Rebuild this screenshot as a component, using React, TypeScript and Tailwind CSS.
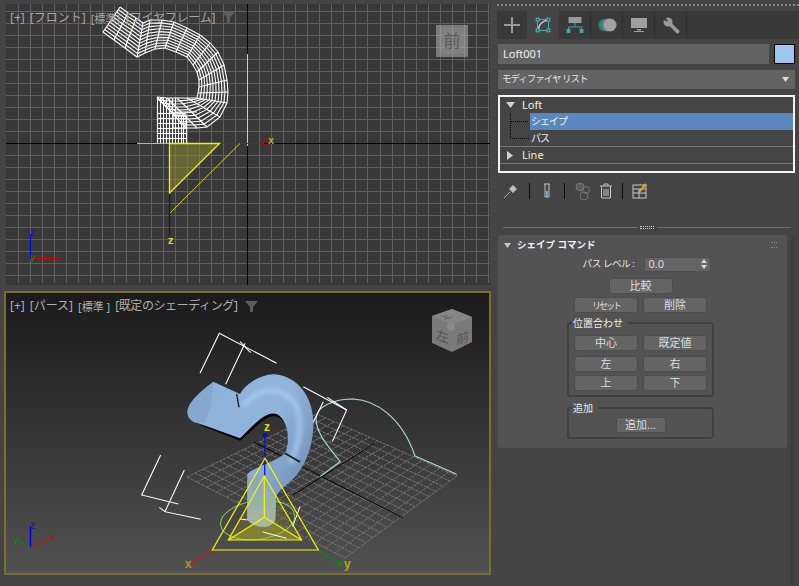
import React from "react";

const range = (n: number) => Array.from({ length: n }, (_, i) => i);
type P = [number, number];
const O0: P[] = [[120,7],[128,13],[136,18],[143,23],[150,20],[162,20],[174,22],[187,28],[200,35],[210,43],[218,52],[224,65],[227,80],[228,92],[227,103],[220,117],[207,127],[197,128],[186,128]];
const I0: P[] = [[103,32],[114,40],[125,48],[137,57],[145,53],[155,49],[165,48],[176,52],[187,57],[193,65],[197,72],[199,80],[199,87],[198,93],[197,98],[187,98],[177,98],[167,98],[157,97]];
const mix = (a: P, b: P, t: number): P => [a[0] + (b[0] - a[0]) * t, a[1] + (b[1] - a[1]) * t];
const pts = (a: P[]) => a.map((p) => p.join(",")).join(" ");

function Wire() {
  const fr = [0, 0.1, 0.2, 0.3, 0.4, 0.5, 0.6, 0.7, 0.8, 0.9, 1];
  return (
    <g stroke="#fff" strokeWidth="1.1" fill="none">
      {O0.map((o, i) => <line key={i} x1={o[0]} y1={o[1]} x2={I0[i][0]} y2={I0[i][1]} />)}
      {fr.map((f) => <polyline key={f} points={pts(O0.map((o, i) => mix(o, I0[i], f)))} />)}
      {[157,160,163,166,169,172,175,178,181,183,186].map((x) => <line key={x} x1={x+0.5} y1={x < 176 ? 98 : 116} x2={x+0.5} y2={143} />)}
      {[113,118,123,128,133,138].map((y) => <line key={y} x1={157} y1={y+0.5} x2={186} y2={y+0.5} />)}
      <polyline points="157,98 176,116 186,116" />
      <polyline points="161,98 176,112 197,112" />
      <rect x="173" y="115" width="13" height="13" />
    </g>
  );
}

function TopView() {
  return (
    <svg className="absolute inset-0 w-full h-full" viewBox="6 4 484 281">
      <g stroke="#606060" strokeWidth="1" shapeRendering="crispEdges">
        {range(40).map((k) => <line key={k} x1={18.5 + 12.05 * k} y1={4} x2={18.5 + 12.05 * k} y2={283} />)}
        {range(23).map((k) => <line key={k} x1={6} y1={11.5 + 12 * k} x2={490} y2={11.5 + 12 * k} />)}
      </g>
      <g shapeRendering="crispEdges">
        <line x1="6" y1="143.5" x2="490" y2="143.5" stroke="#000" />
        <line x1="247.5" y1="4" x2="247.5" y2="285" stroke="#000" />
        <line x1="247.5" y1="54" x2="247.5" y2="146" stroke="#a6d8dc" />
        <line x1="137" y1="143.5" x2="169" y2="143.5" stroke="#9ccc70" />
        <line x1="220" y1="143.5" x2="264" y2="143.5" stroke="#a81010" />
        <line x1="169.5" y1="193" x2="169.5" y2="235" stroke="#000c90" />
      </g>
      <Wire />
      <polygon points="169.5,143.5 219.5,143.5 169.5,193" fill="#8c8a30" fillOpacity="0.55" stroke="#f5f000" strokeWidth="1.3" />
      <line x1="240" y1="143.5" x2="170" y2="213" stroke="#e6e020" strokeWidth="0.9" />
      <rect x="263" y="141" width="4" height="4" fill="none" stroke="#c00000" strokeWidth="1.2" />
      <text x="268" y="144" fill="#b5b020" fontSize="11" fontWeight="700" fontFamily="Liberation Sans, sans-serif">x</text>
      <text x="168" y="244" fill="#e6d820" fontSize="11" fontWeight="700" fontFamily="Liberation Sans, sans-serif">z</text>
      <g shapeRendering="crispEdges">
        <line x1="30.5" y1="259" x2="30.5" y2="234" stroke="#0000e0" strokeWidth="1.5" />
        <line x1="31" y1="258.5" x2="55" y2="258.5" stroke="#e00000" strokeWidth="1.5" />
      </g>
      <text x="30" y="236" fill="#1010d0" fontSize="10" fontFamily="Liberation Sans, sans-serif">z</text>
      <text x="30" y="261" fill="#0d8a0d" fontSize="11" fontFamily="Liberation Sans, sans-serif">y</text>
      <text x="55" y="261" fill="#8c2020" fontSize="11" fontFamily="Liberation Sans, sans-serif">x</text>
      <rect x="436" y="25" width="32" height="32" fill="#b0b0b0" fillOpacity="0.55" />
      <rect x="439" y="28" width="26" height="26" fill="#b0b0b0" fillOpacity="0.12" />
      <text x="452" y="47" textAnchor="middle" fill="#5c5c5c" fontSize="17" fontFamily="Noto Sans CJK JP, sans-serif">前</text>
      <polygon points="222,12 235,12 230,18 230,24 227,24 227,18" fill="#5c5c5c" />
    </svg>
  );
}

function PerspView() {
  const L: P = [187, 477], T: P = [317, 414], R: P = [457, 476], B: P = [345, 558];
  const cells = range(17).map((k) => k / 16);
  return (
    <svg className="absolute inset-0 w-full h-full" viewBox="6 293 483 280">
      <defs>
        <linearGradient id="tube" x1="0" y1="0" x2="1" y2="0.7">
          <stop offset="0" stopColor="#8fb2da" />
          <stop offset="0.6" stopColor="#90b3da" />
          <stop offset="1" stopColor="#7091b8" />
        </linearGradient>
        <linearGradient id="stem" x1="0" y1="0" x2="0" y2="1">
          <stop offset="0" stopColor="#88a6c8" />
          <stop offset="1" stopColor="#a9b99a" />
        </linearGradient>
        <filter id="soft"><feGaussianBlur stdDeviation="7" /></filter>
        <filter id="soft2"><feGaussianBlur stdDeviation="1" /></filter>
      </defs>
      <g stroke="#747474" strokeWidth="1" strokeDasharray="3 1" fill="none">
        {cells.map((t) => <line key={"a" + t} x1={mix(L, T, t)[0]} y1={mix(L, T, t)[1]} x2={mix(B, R, t)[0]} y2={mix(B, R, t)[1]} />)}
        {cells.map((t) => <line key={"b" + t} x1={mix(L, B, t)[0]} y1={mix(L, B, t)[1]} x2={mix(T, R, t)[0]} y2={mix(T, R, t)[1]} />)}
      </g>
      <line x1="375" y1="443" x2="293" y2="495" stroke="#050505" />
      <line x1="254" y1="442" x2="403" y2="518" stroke="#050505" />
      <g transform="translate(300 380) scale(0.3333)">
        <path d="M60,290 L120,245 C95,210 48,165 48,115 C50,80 100,57 160,57 C225,60 305,110 345,228 L470,283" fill="none" stroke="#a8dde0" strokeWidth="3.5" strokeLinejoin="round" />
      </g>
      <g transform="translate(130 320) scale(0.3333)">
        <g fill="none" stroke="#fff" strokeWidth="3.2">
          <polyline points="210,160 268,40 440,130" />
          <polyline points="330,65 362,98" />
          <polyline points="345,70 287,193" />
          <polyline points="520,200 650,270 607,365" />
          <polyline points="592,232 650,270" />
          <polyline points="580,245 548,310" />
          <polyline points="92,405 35,525 145,552" />
          <polyline points="163,450 105,575 212,598" />
          <polyline points="88,562 105,575" />
        </g>
        <polygon points="403,468 295,660 515,660" fill="#8a8630" opacity="0.3" />
        <polygon points="295,660 403,592 515,660" fill="#8a8630" opacity="0.85" />
        <path d="M205,313 L330,362 C360,340 400,290 430,288 C470,290 485,350 470,398 L512,428 L470,300 L430,270 L330,340 Z" fill="#050505" filter="url(#soft2)" />
        <path d="M250,185 L330,222 C345,195 385,165 430,163 C490,165 545,215 550,300 C552,360 535,420 500,465 C480,490 445,510 438,530 L436,600 L352,600 L352,462 C375,440 430,430 465,400 C482,365 475,300 440,282 C410,272 380,305 330,355 L205,310 C170,300 165,265 190,240 Z" fill="url(#tube)" />
        <path d="M340,260 C380,205 450,190 495,250 C520,300 510,370 480,430" fill="none" stroke="#aecdf0" strokeWidth="18" filter="url(#soft)" opacity="0.7" />
        <path d="M250,185 C210,215 170,250 172,280 C175,305 205,318 225,305 C240,280 245,230 250,185 Z" fill="#86a8d0" />
        <path d="M320,222 L327,262" stroke="#1a1a1a" strokeWidth="4" fill="none" />
        <path d="M465,400 L510,426" stroke="#1a1a1a" strokeWidth="5" fill="none" />
        <path d="M352,480 C375,460 415,470 438,530 L436,600 C425,628 375,628 352,600 Z" fill="url(#stem)" />
        <ellipse cx="383" cy="600" rx="112" ry="58" transform="rotate(-8 383 600)" fill="none" stroke="#86c860" strokeWidth="3" />
        <g fill="none" stroke="#fff" strokeWidth="3">
          <polyline points="330,597 352,600" />
          <polyline points="510,560 488,620" />
          <polyline points="398,636 470,655" />
        </g>
        <line x1="405" y1="345" x2="404" y2="470" stroke="#0a0ad0" strokeWidth="3.5" />
        <rect x="399" y="339" width="12" height="12" fill="#0a0ad0" />
        <line x1="247" y1="690" x2="180" y2="732" stroke="#d01010" strokeWidth="3.5" />
        <line x1="565" y1="690" x2="630" y2="732" stroke="#0a8a0a" strokeWidth="3.5" />
        <rect x="624" y="726" width="12" height="12" fill="#0a8a0a" />
        <g fill="none" stroke="#f8f400" strokeWidth="3.6">
          <polygon points="405,415 247,690 565,690" />
          <polygon points="403,468 295,660 515,660" />
          <polyline points="403,468 403,592 295,660" />
          <line x1="403" y1="592" x2="515" y2="660" />
        </g>
      </g>
      <text x="264" y="431" fill="#e0d820" fontSize="12" fontWeight="700" fontFamily="Liberation Sans, sans-serif">z</text>
      <text x="185" y="568" fill="#b09820" fontSize="12" fontWeight="700" fontFamily="Liberation Sans, sans-serif">x</text>
      <text x="344" y="568" fill="#b0a820" fontSize="12" fontWeight="700" fontFamily="Liberation Sans, sans-serif">y</text>
      <line x1="30.5" y1="548" x2="30.5" y2="526" stroke="#0000e0" strokeWidth="1.5" />
      <line x1="30.5" y1="548" x2="52" y2="537" stroke="#d01010" strokeWidth="1.3" />
      <line x1="30.5" y1="548" x2="18" y2="541" stroke="#0a8a0a" strokeWidth="1.3" />
      <text x="30" y="529" fill="#1010d0" fontSize="10" fontFamily="Liberation Sans, sans-serif">z</text>
      <text x="49" y="541" fill="#7c2a2a" fontSize="11" fontFamily="Liberation Sans, sans-serif">x</text>
      <text x="13" y="543" fill="#0d8a0d" fontSize="11" fontFamily="Liberation Sans, sans-serif">y</text>
      <polygon points="432,316 452,309 472,317 472,342 452,352 432,343" fill="#7a7a7a" />
      <polygon points="432,316 452,309 472,317 452,325" fill="#858585" />
      <circle cx="451" cy="327" r="4" fill="#858c90" />
      <text transform="matrix(1 .35 0 1 436 339)" fill="#565656" fontSize="13" fontFamily="Noto Sans CJK JP, sans-serif">左</text>
      <text transform="matrix(1 -.35 0 1 456 345)" fill="#565656" fontSize="13" fontFamily="Noto Sans CJK JP, sans-serif">前</text>
      <text transform="matrix(1 -.4 1 .4 444 320)" fill="#565656" fontSize="9" fontFamily="Noto Sans CJK JP, sans-serif">上</text>
      <polygon points="245,301 258,301 253,307 253,312 250,312 250,307" fill="#5c5c5c" />
    </svg>
  );
}

const Btn = ({ w, children }: { w: string; children: React.ReactNode }) => (
  <button className={`${w} h-[16px] bg-[#646464] border border-[#4c4c4c] rounded-[3px] text-[11px] leading-[14px] text-[#dcdcdc]`}>{children}</button>
);

const tabIcons = [
  <svg key="a" width="18" height="18" viewBox="0 0 18 18"><path d="M9 1v16M1 9h16" stroke="#9a9a9a" strokeWidth="2" /></svg>,
  <svg key="b" width="16" height="16" viewBox="0 0 20 20" fill="none"><rect x="3" y="3" width="14" height="14" stroke="#3fb6b6" strokeWidth="1.2" /><path d="M4 16C5 9 9 5 16 4" stroke="#b8b8b8" strokeWidth="2" /><g fill="#333" stroke="#3fc6c6" strokeWidth="1.2"><rect x="1.500" y="1.500" width="3.500" height="3.500" /><rect x="15" y="1.500" width="3.500" height="3.500" /><rect x="1.500" y="15" width="3.500" height="3.500" /><rect x="15" y="15" width="3.500" height="3.500" /></g></svg>,
  <svg key="c" width="20" height="18" viewBox="0 0 20 18" fill="none"><rect x="3.500" y="1" width="13" height="6" fill="#9a9a9a" /><path d="M10 7v4M3.500 14v-3h13v3" stroke="#3aa6a6" /><rect x="1.500" y="13" width="4" height="4" fill="#3aa6a6" /><rect x="14.500" y="13" width="4" height="4" fill="#3aa6a6" /></svg>,
  <svg key="d" width="20" height="20" viewBox="0 0 20 20" fill="none"><circle cx="7" cy="10" r="6" fill="#3f6e6e" /><circle cx="10" cy="10" r="6.500" fill="#4a8686" /><circle cx="13" cy="10" r="6.500" fill="#a0a0a0" /></svg>,
  <svg key="e" width="20" height="20" viewBox="0 0 20 20"><rect x="2" y="3" width="16" height="10" fill="#a0a0a0" /><rect x="8" y="14" width="4" height="1.500" fill="#a0a0a0" /><rect x="5" y="16" width="10" height="1" fill="#a0a0a0" /></svg>,
  <svg key="f" width="18" height="18" viewBox="0 0 18 18" fill="none"><line x1="6" y1="6" x2="15.500" y2="15.500" stroke="#9a9a9a" strokeWidth="3.500" /><circle cx="6" cy="6" r="4.500" fill="#9a9a9a" /><polygon points="6,6 0,3 3,0" fill="#393939" /><circle cx="15.500" cy="15.500" r="2" fill="#9a9a9a" /></svg>,
];

const Sep = () => <span className="w-px h-[16px] bg-[#0c0c0c]" />;

export default function App() {
  const jp = "font-['Noto_Sans','Noto_Sans_CJK_JP',sans-serif]";
  return (
    <div className={`w-[799px] h-[586px] bg-[#444444] flex overflow-hidden ${jp}`}>
      <div className="w-[497px] flex flex-col pt-[4px]">
        <div className="relative ml-[6px] w-[484px] h-[281px] bg-[#383838] overflow-hidden">
          <TopView />
          <div className="absolute left-[4px] top-[6px] flex gap-[5px] text-[12px] leading-[16px] text-[#a6a6a6]">
            <span>[+]</span><span>[フロント]</span><span className="text-[11px] mt-[1px] mr-[1px]">[標準]</span><span className="tracking-[-0.2px]">[ワイヤフレーム]</span>
          </div>
        </div>
        <div className="relative ml-[4px] mt-[6px] w-[487px] h-[284px] border-2 border-[#7d6c35] bg-gradient-to-b from-[#1b1b1b] to-[#525252] overflow-hidden">
          <PerspView />
          <div className="absolute left-[4px] top-[5px] flex gap-[5px] text-[12px] leading-[16px] text-[#b0b0b0]">
            <span>[+]</span><span>[パース]</span><span className="text-[11px] mt-[1px]">[標準 ]</span><span className="tracking-[-0.4px]">[既定のシェーディング]</span>
          </div>
        </div>
      </div>

      <div className="w-[302px] h-full flex flex-col">
        <div className="h-[11px] pt-[4px]"><div className="h-[2px] border-t-2 border-dotted border-[#8a8a8a]" /></div>
        <div className="h-[28px] bg-[#393939] flex items-center pr-[8px]">
          {tabIcons.map((ic, i) => (
            <div key={i} className={`${i === 0 ? "w-[30px]" : "w-[32px]"} h-[28px] flex items-center justify-center ${i === 1 ? "bg-[#444444]" : ""} ${i > 1 ? "border-r border-[#2c2c2c]" : ""}`}>{ic}</div>
          ))}
        </div>
        <div className="mt-[5px] flex gap-[5px] pl-[1px] pr-[4px] h-[20px]">
          <div className="flex-1 bg-[#636363] text-[11px] leading-[20px] pl-[5px] text-[#f0f0f0]">Loft001</div>
          <div className="w-[21px] bg-[#9fc6ee] border border-black" />
        </div>
        <div className="mt-[6px] ml-[1px] mr-[4px] h-[19px] bg-[#636363] flex items-center justify-between pl-[4px] pr-[6px] text-[9.5px] tracking-[-1px] text-[#e4e4e4]">
          <span>モディファイヤ リスト</span>
          <svg width="7" height="5" viewBox="0 0 7 5"><path d="M0 0h7L3.500 5z" fill="#dcdcdc" /></svg>
        </div>
        <div className="mt-[6px] ml-[1px] mr-[4px] h-[78px] border-2 border-[#f4f4f4] bg-[#454545] text-[11px] text-[#f0f0f0]">
          <div className="h-[16px] flex items-center">
            <svg className="ml-[6px]" width="9" height="6" viewBox="0 0 9 6"><path d="M0 0h9L4.500 6z" fill="#cfcfcf" /></svg>
            <span className="ml-[7px]">Loft</span>
          </div>
          <div className="h-[17px] flex">
            <svg className="w-[30px] shrink-0" width="30" height="17" viewBox="0 0 30 17"><path d="M10.500 0v17M11 8.500h18" stroke="#000" strokeDasharray="1 1" fill="none" /></svg>
            <span className="flex-1 bg-[#5b87bf] leading-[17px] pl-[1px] text-[10px] tracking-[-1px]">シェイプ</span>
          </div>
          <div className="h-[16px] flex border-b border-[#777] box-content">
            <svg className="w-[30px] shrink-0" width="30" height="16" viewBox="0 0 30 16"><path d="M10.500 0v8.500H29" stroke="#000" strokeDasharray="1 1" fill="none" /></svg>
            <span className="leading-[16px] pl-[1px] text-[10px] tracking-[-1px]">パス</span>
          </div>
          <div className="h-[16px] flex items-center border-b border-[#777] box-content">
            <svg className="ml-[7px]" width="6" height="9" viewBox="0 0 6 9"><path d="M0 0v9L6 4.500z" fill="#cfcfcf" /></svg>
            <span className="ml-[9px] text-[#f0eecc]">Line</span>
          </div>
        </div>
        <div className="mt-[9px] ml-[6px] h-[18px] flex items-center">
          <svg className="mr-[10px]" width="16" height="16" viewBox="0 0 16 16" fill="none"><path d="M1 15l6-6" stroke="#aaa" /><path d="M6 6l4-4 4 4-4 4z" fill="#bdbdbd" /></svg>
          <Sep />
          <svg className="mx-[9px]" width="16" height="16" viewBox="0 0 16 16" fill="none"><path d="M5 1h6M6 1v13h4V1" stroke="#bdbdbd" /><rect x="7" y="8" width="2" height="6" fill="#46c0c4" /></svg>
          <Sep />
          <svg className="ml-[9px]" width="18" height="18" viewBox="0 0 18 18" fill="none" stroke="#777"><circle cx="6" cy="5" r="4" fill="#5a5a5a" /><circle cx="12" cy="8" r="3.500" /><circle cx="10" cy="14" r="4" /></svg>
          <svg className="ml-[7px] mr-[9px]" width="14" height="16" viewBox="0 0 14 16" fill="none" stroke="#c4c4c4"><path d="M1 3h12M5 3V1h4v2M2.500 3v12h9V3M5 6v7M7 6v7M9 6v7" /></svg>
          <Sep />
          <svg className="ml-[9px]" width="16" height="16" viewBox="0 0 16 16" fill="none"><rect x="1" y="2" width="13" height="13" stroke="#c8c8c8" /><path d="M1 6h13M1 10h13M7 6v9" stroke="#c8c8c8" /><path d="M7 9l7-8" stroke="#f0a020" strokeWidth="2" /></svg>
        </div>
        <div className="mt-[25px] flex items-center gap-[3px] h-[4px] pl-[6px] pr-[8px]">
          <span className="flex-1 h-px bg-[#6e6e6e]" />
          <span className="w-[14px] h-[3px] border-y border-dotted border-[#cfcfcf]" />
          <span className="flex-1 h-px bg-[#6e6e6e]" />
        </div>
        <div className="mt-[6px] flex gap-[3px] flex-1 pl-[1px] pr-[4px]">
          <div className="w-[290px] h-[213px] bg-[#535353] rounded-[3px] flex flex-col items-center pr-[4px]">
            <div className="self-stretch h-[18px] mt-[1px] flex items-center pl-[6px] text-[9.500px] font-bold text-[#f2f2f2]">
              <svg width="7" height="5" viewBox="0 0 7 5"><path d="M0 0h7L3.500 5z" fill="#c8c8c8" /></svg>
              <span className="ml-[6px]">シェイプ コマンド</span>
              <span className="ml-auto mr-[6px] w-[6px] h-[6px] border-y border-dotted border-[#8a8a8a]" />
            </div>
            <div className="mt-[3px] ml-[13px] h-[14px] flex items-center">
              <span className="text-[9.500px] tracking-[-0.4px] text-[#e8e8e8] mr-[10px]">パス レベル :</span>
              <div className="w-[67px] h-[15px] bg-[#646464] border border-[#4c4c4c] flex items-center justify-between px-[3px] text-[11px] text-[#dcdcdc]">
                <span>0.0</span>
                <svg width="6" height="10" viewBox="0 0 6 10"><path d="M0 4l3-4 3 4zM0 6l3 4 3-4z" fill="#dcdcdc" /></svg>
              </div>
            </div>
            <div className="mt-[7px] flex"><Btn w="w-[64px]">比較</Btn></div>
            <div className="mt-[3px] flex gap-[5px]"><Btn w="w-[64px]"><span className="text-[9px] tracking-[-2px]">リセット</span></Btn><Btn w="w-[64px]">削除</Btn></div>
            <fieldset className="mt-[3px] w-[147px] h-[81px] border-2 border-[#404040] rounded-[3px] px-[5px]">
              <legend className="ml-[-2px] pl-[1px] pr-[5px] text-[10px] leading-[14px] text-[#ededed]">位置合わせ</legend>
              <div className="mt-[5px] flex justify-between"><Btn w="w-[64px]">中心</Btn><Btn w="w-[64px]">既定値</Btn></div>
              <div className="mt-[5px] flex justify-between"><Btn w="w-[64px]">左</Btn><Btn w="w-[64px]">右</Btn></div>
              <div className="mt-[3px] flex justify-between"><Btn w="w-[64px]">上</Btn><Btn w="w-[64px]">下</Btn></div>
            </fieldset>
            <fieldset className="mt-[4px] w-[147px] h-[38px] border-2 border-[#404040] rounded-[3px] px-[5px]">
              <legend className="ml-[-2px] pl-[1px] pr-[5px] text-[10px] leading-[14px] text-[#ededed]">追加</legend>
              <div className="mt-[2px] flex justify-center"><Btn w="w-[50px]">追加...</Btn></div>
            </fieldset>
          </div>
          <div className="w-[5px] h-full bg-[#3f3f3f]" />
        </div>
      </div>
    </div>
  );
}
